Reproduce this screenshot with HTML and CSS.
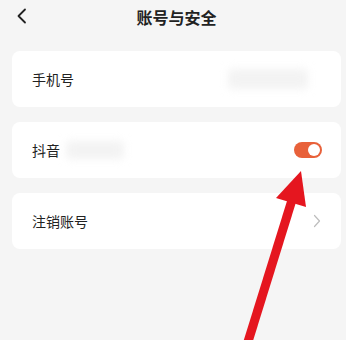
FILE: index.html
```html
<!DOCTYPE html>
<html lang="zh">
<head>
<meta charset="utf-8">
<link rel="stylesheet" href="styles.css">
</head>
<body>
<div class="page">
  <header class="nav">
    <svg class="back" width="12" height="16" viewBox="0 0 12 16"><path d="M9 1.5 L2.5 8 L9 14.5" fill="none" stroke="#222" stroke-width="1.8" stroke-linecap="round" stroke-linejoin="round"/></svg>
    <h1 class="title">账号与安全</h1>
  </header>
  <section class="card">
    <span class="label">手机号</span>
    <span class="blur blur-phone"></span>
  </section>
  <section class="card">
    <span class="label">抖音</span>
    <span class="blur blur-dy"></span>
    <span class="toggle"><span class="knob"></span></span>
  </section>
  <section class="card">
    <span class="label">注销账号</span>
    <svg class="chev" width="8" height="14" viewBox="0 0 8 14"><path d="M1.5 1.5 L6.5 7 L1.5 12.5" fill="none" stroke="#bdbdbd" stroke-width="1.2" stroke-linecap="round" stroke-linejoin="round"/></svg>
  </section>
</div>
<svg class="arrow" width="346" height="340" viewBox="0 0 346 340">
  <line x1="247" y1="345" x2="292" y2="200" stroke="#e5161f" stroke-width="9"/>
  <polygon points="301,171 276,198 306,207" fill="#e5161f"/>
</svg>
</body>
</html>
```
FILE: styles.css
```css
html, body {
  margin: 0;
  padding: 0;
  background: #f5f5f5;
  font-family: "Noto Sans CJK SC", "Noto Sans", sans-serif;
  width: 346px;
  height: 340px;
  overflow: hidden;
}
.page {
  padding: 0 5px 0 12px;
  display: flex;
  flex-direction: column;
  gap: 15.5px;
}
.nav {
  position: relative;
  height: 34px;
  display: flex;
  align-items: center;
  justify-content: center;
  margin-bottom: 1.5px;
}
.back {
  position: absolute;
  left: 4px;
  top: 8px;
}
.title {
  margin: 0;
  font-size: 16px;
  font-weight: 600;
  color: #222;
  line-height: 34px;
}
.card {
  background: #fff;
  border-radius: 8px;
  height: 55.5px;
  display: flex;
  align-items: center;
  padding: 0 19px 0 20px;
}
.label {
  font-size: 14px;
  color: #222;
}
.blur {
  display: block;
  filter: blur(4px);
  border-radius: 4px;
}
.blur-phone {
  margin-left: auto;
  margin-right: 14px;
  width: 80px;
  height: 20px;
  background: #f3f3f3;
}
.blur-dy {
  margin-left: 6px;
  width: 58px;
  height: 18px;
  background: #f3f3f3;
}
.toggle {
  margin-left: auto;
  width: 28px;
  height: 16px;
  border-radius: 8px;
  background: #e8613a;
  position: relative;
}
.knob {
  position: absolute;
  right: 2px;
  top: 2px;
  width: 12px;
  height: 12px;
  border-radius: 50%;
  background: #fff;
}
.chev {
  margin-left: auto;
  margin-right: 1px;
}
.arrow {
  position: absolute;
  left: 0;
  top: 0;
  pointer-events: none;
}
```
